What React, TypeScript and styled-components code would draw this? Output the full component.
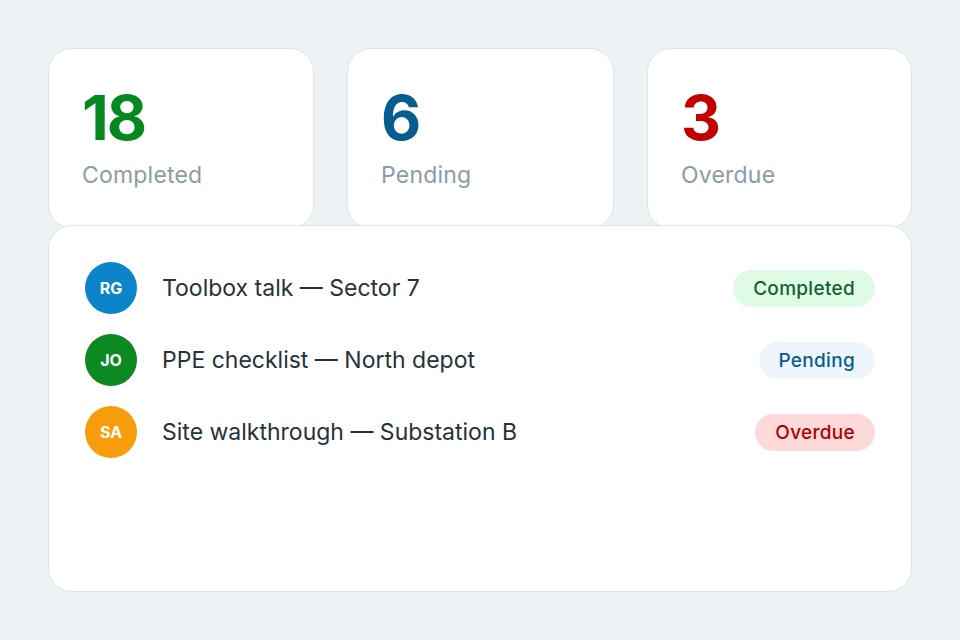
import React from "react";
import styled, { createGlobalStyle } from "styled-components";

const GlobalStyle = createGlobalStyle`
  html, body { margin: 0; padding: 0; }
  body {
    background: #edf2f5;
    font-family: Inter, "Noto Sans", sans-serif;
    -webkit-font-smoothing: antialiased;
  }
`;

const Page = styled.div`
  width: 960px;
  height: 640px;
  box-sizing: border-box;
  padding: 48px 48px 0 48px;
  display: flex;
  flex-direction: column;
`;

const StatRow = styled.div`
  display: grid;
  grid-template-columns: 266px 267px 265px;
  column-gap: 33px;
  justify-content: space-between;
`;

const StatCard = styled.div`
  height: 181px;
  box-sizing: border-box;
  background: #fff;
  border: 1.5px solid #dbe5ea;
  border-radius: 24px;
  padding: 38px 32px 0 33px;
  display: flex;
  flex-direction: column;
`;

const StatValue = styled.div<{ $color: string }>`
  font-size: 62px;
  font-weight: 700;
  line-height: 62px;
  letter-spacing: -2px;
  color: ${(p) => p.$color};
`;

const StatLabel = styled.div`
  margin-top: 12px;
  font-size: 23px;
  line-height: 28px;
  letter-spacing: 0.2px;
  color: #8c9ba7;
`;

const ListCard = styled.div`
  margin-top: -4px;
  height: 367px;
  box-sizing: border-box;
  background: #fff;
  border: 1.5px solid #dbe5ea;
  border-radius: 24px;
  padding: 36px 36px;
  display: flex;
  flex-direction: column;
  gap: 20px;
`;

const Row = styled.div`
  display: flex;
  align-items: center;
  height: 52px;
`;

const Avatar = styled.div<{ $bg: string }>`
  width: 52px;
  height: 52px;
  border-radius: 50%;
  background: ${(p) => p.$bg};
  color: #fff;
  font-size: 16px;
  font-weight: 700;
  display: flex;
  align-items: center;
  justify-content: center;
  flex-shrink: 0;
`;

const Title = styled.div`
  margin-left: 25px;
  flex: 1;
  font-size: 23px;
  color: #27313b;
`;

const Badge = styled.div<{ $bg: string; $fg: string }>`
  height: 37px;
  padding: 0 20px;
  border-radius: 19px;
  display: flex;
  align-items: center;
  background: ${(p) => p.$bg};
  color: ${(p) => p.$fg};
  font-size: 19px;
  font-weight: 500;
  letter-spacing: 0.3px;
`;

const stats = [
  { value: "18", label: "Completed", color: "#05891f" },
  { value: "6", label: "Pending", color: "#065d8e" },
  { value: "3", label: "Overdue", color: "#c20000" },
];

const statusStyles: Record<string, { bg: string; fg: string }> = {
  Completed: { bg: "#ddfbe5", fg: "#17602d" },
  Pending: { bg: "#eef6fc", fg: "#085e91" },
  Overdue: { bg: "#fdd9d9", fg: "#b20000" },
};

const rows = [
  { initials: "RG", color: "#0b85c9", title: "Toolbox talk — Sector 7", status: "Completed" },
  { initials: "JO", color: "#0a8a20", title: "PPE checklist — North depot", status: "Pending" },
  { initials: "SA", color: "#f89c0b", title: "Site walkthrough — Substation B", status: "Overdue" },
];

export default function App() {
  return (
    <>
      <GlobalStyle />
      <Page>
        <StatRow>
          {stats.map((s) => (
            <StatCard key={s.label}>
              <StatValue $color={s.color}>{s.value}</StatValue>
              <StatLabel>{s.label}</StatLabel>
            </StatCard>
          ))}
        </StatRow>
        <ListCard>
          {rows.map((r) => (
            <Row key={r.initials}>
              <Avatar $bg={r.color}>{r.initials}</Avatar>
              <Title>{r.title}</Title>
              <Badge $bg={statusStyles[r.status].bg} $fg={statusStyles[r.status].fg}>
                {r.status}
              </Badge>
            </Row>
          ))}
        </ListCard>
      </Page>
    </>
  );
}
